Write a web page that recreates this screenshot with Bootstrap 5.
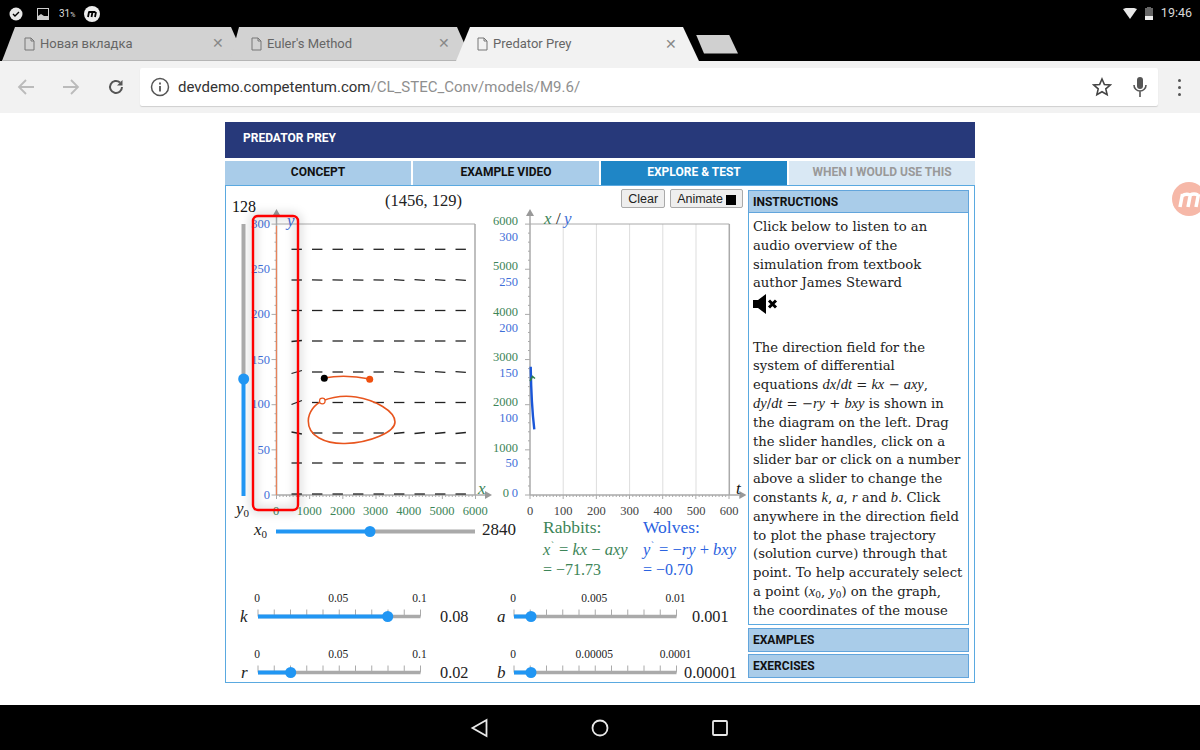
<!DOCTYPE html>
<html lang="en">
<head>
  <meta charset="UTF-8" />
  <meta name="viewport" content="width=device-width, initial-scale=1" />
  <title>Predator Prey</title>
  <link href="https://cdn.jsdelivr.net/npm/bootstrap@5.3.3/dist/css/bootstrap.min.css" rel="stylesheet" />
  <style>
    html, body { height: 750px; overflow: hidden; }
    body { background: #fff; font-family: Roboto, "Liberation Sans", sans-serif; }
    .status-strip { height: 27px; background: #000; color: #ddd; font-size: 10px; padding: 0 8px; }
    .st-img { margin-left: 13px; }
    .st-pct { margin-left: 10px; }
    .status-time { font-size: 12.5px; color: #d8d8d8; }
    .tab-strip { height: 34px; background: #000; padding-left: 2px; }
    .chrome-tab { height: 34px; background: #d2d2d2; color: #666; font-size: 13px; margin-right: -16px; border-bottom: 1px solid #b5b5b5; }
    .tab-a { width: 244px; padding: 0 22px; clip-path: polygon(0 100%, 13px 0, 229px 0, 244px 100%); }
    .tab-b { width: 242px; padding: 0 22px 0 21px; clip-path: polygon(0 100%, 9px 0, 227px 0, 242px 100%); }
    .tab-c { width: 243px; padding: 0 22px 0 21px; background: #f2f2f2; border-bottom: 0; clip-path: polygon(0 100%, 14px 0, 227px 0, 243px 100%); }
    .new-tab { width: 42px; height: 19px; margin-left: 13px; background: #d0d0d0; clip-path: polygon(0 0, 33px 0, 42px 100%, 8px 100%); }
    .tab-label { padding-left: 5px; }
    .tab-x { font-size: 14px; color: #888; }
    .tool-strip { height: 52px; background: #f2f2f2; padding: 7px 0; }
    .url-box { width: 1018px; height: 38px; background: #fff; box-shadow: 0 1px 1px #cfcfcf; font-size: 15px; color: #333; padding: 0 10px; border-radius: 2px; }
    .url-path { color: #8f8f8f; }
    .mic-gap { margin-left: 20px; }
    .nav-icons { width: 140px; padding-left: 17px; gap: 27px; }
    .page-area { height: 592px; padding-top: 9px; }
    .sim-wrap { width: 750px; margin: 0 auto; }
    .sim-title { height: 36px; background: #27397a; color: #fff; font-size: 12px; font-weight: 700; padding: 0 0 4px 18px; }
    .sim-tabs { margin-top: 3px; height: 24px; gap: 2px; }
    .sim-tab { flex: 1 1 0; background: #a9cce9; color: #111; font-size: 12px; font-weight: 700; padding-bottom: 2px; }
    .sim-tab.on { background: #1f86c6; color: #fff; }
    .sim-tab.off { background: #d9e8f4; color: #999; }
    .sim-box { height: 498px; border: 1px solid #5aa9e0; }
    .canvas-side { width: 520px; height: 496px; }
    .canvas-side svg { display: block; }
    .canvas-side text { font-family: "Liberation Serif", serif; }
    .sim-btns { top: 3px; right: 3px; gap: 5px; }
    .sim-btn { font-family: "Liberation Sans", sans-serif; font-size: 12.5px; line-height: 1; padding: 3px 6px 1px; height: 19px; background: #eee; border: 1px solid #aaa; border-radius: 2px; color: #222; }
    .stop-sq { width: 10px; height: 10px; background: #000; margin-left: 3px; }
    .side-panel { width: 223px; padding: 4px 0 0 2px; }
    .side-head { background: #a9cce9; border: 1px solid #62a5dc; color: #111; font-size: 12px; font-weight: 700; padding: 0 4px; }
    .head-a { height: 23px; }
    .head-b { height: 24px; margin-top: 3px; }
    .head-c { height: 24px; margin-top: 2px; }
    .side-body { height: 412px; overflow: hidden; border: 1px solid #5aa9e0; border-top: 0; padding: 5px 4px 0 4px; font-family: "DejaVu Serif", serif; font-size: 13.2px; line-height: 18.8px; color: #222; white-space: nowrap; }
    .side-body i { font-family: "Liberation Serif", serif; font-size: 14.5px; line-height: 1; }
    .side-body sub { font-size: 9px; line-height: 0; }
    .sound-row { height: 45.4px; padding-top: 1px; }
    .promo-dot { left: 1172px; top: 182px; width: 28px; height: 34px; overflow: hidden; }
    .bottom-strip { height: 45px; background: #000; }
  </style>
</head>
<body class="position-relative">

  <!-- android status bar -->
  <div class="status-strip d-flex align-items-center">
    <svg width="16" height="16" viewBox="0 0 16 16"><circle cx="8" cy="8" r="6.5" fill="#e8e8e8"/><path d="M5 8l2 2 4-4" fill="none" stroke="#000" stroke-width="1.4"/></svg>
    <svg class="st-img" width="12" height="12" viewBox="0 0 12 12"><rect x=".5" y=".5" width="11" height="11" fill="none" stroke="#ccc"/><path d="M1 11V8l3-2 3 2 4 0v3z" fill="#ccc"/></svg>
    <span class="st-pct">31<small style="font-size:7px">%</small></span>
    <svg class="ms-2" width="18" height="18" viewBox="0 0 18 18"><circle cx="9" cy="9" r="8" fill="#eee"/><path d="M5 12l1-5M8.500 12l1-5M12 12l1-5M5.500 7h7" fill="none" stroke="#000" stroke-width="1.800"/></svg>
    <div class="ms-auto d-flex align-items-center gap-2">
      <svg width="14" height="11" viewBox="0 0 14 11"><path d="M0 1Q7-2 14 1L7 11z" fill="#e8e8e8"/></svg>
      <svg width="8" height="13" viewBox="0 0 8 13"><rect y="1" width="8" height="12" fill="#666"/><rect y="9" width="8" height="4" fill="#eee"/><rect x="2" width="4" height="1" fill="#666"/></svg>
      <span class="status-time">19:46</span>
    </div>
  </div>

  <!-- chrome tabs -->
  <div class="tab-strip d-flex align-items-center">
    <div class="chrome-tab tab-a d-flex align-items-center">
      <svg width="11" height="14" viewBox="0 0 11 14"><path d="M1 1h6l3 3v9H1zM7 1v3h3" fill="none" stroke="#777"/></svg>
      <span class="tab-label">Новая вкладка</span>
      <span class="tab-x ms-auto">✕</span>
    </div>
    <div class="chrome-tab tab-b d-flex align-items-center">
      <svg width="11" height="14" viewBox="0 0 11 14"><path d="M1 1h6l3 3v9H1zM7 1v3h3" fill="none" stroke="#777"/></svg>
      <span class="tab-label">Euler's Method</span>
      <span class="tab-x ms-auto">✕</span>
    </div>
    <div class="chrome-tab tab-c d-flex align-items-center">
      <svg width="11" height="14" viewBox="0 0 11 14"><path d="M1 1h6l3 3v9H1zM7 1v3h3" fill="none" stroke="#777"/></svg>
      <span class="tab-label">Predator Prey</span>
      <span class="tab-x ms-auto">✕</span>
    </div>
    <div class="new-tab"></div>
  </div>

  <!-- chrome toolbar -->
  <div class="tool-strip d-flex">
    <div class="nav-icons d-flex align-items-center">
      <svg width="18" height="18" viewBox="0 0 18 18"><path d="M17 9H2M9 2L2 9l7 7" fill="none" stroke="#bbb" stroke-width="1.800"/></svg>
      <svg width="18" height="18" viewBox="0 0 18 18"><path d="M1 9h15M9 2l7 7-7 7" fill="none" stroke="#bbb" stroke-width="1.800"/></svg>
      <svg width="18" height="18" viewBox="0 0 18 18"><path d="M15 9a6 6 0 1 1-2-4.500" fill="none" stroke="#555" stroke-width="2"/><path d="M15.500 2v5.500H10z" fill="#555"/></svg>
    </div>
    <div class="url-box d-flex align-items-center">
      <svg class="me-2" width="20" height="20" viewBox="0 0 20 20"><circle cx="10" cy="10" r="8.500" fill="none" stroke="#555" stroke-width="1.500"/><path d="M10 9v5.500M10 5.500v2" stroke="#555" stroke-width="1.800"/></svg>
      <span>devdemo.competentum.com<span class="url-path">/CL_STEC_Conv/models/M9.6/</span></span>
      <svg class="ms-auto" width="20" height="20" viewBox="0 0 20 20"><path d="M10 2l2.400 5.500 5.800.5-4.400 3.900 1.300 5.800L10 14.700l-5.100 3 1.300-5.800L1.800 8l5.800-.5z" fill="none" stroke="#444" stroke-width="1.600"/></svg>
      <svg class="mic-gap" width="16" height="22" viewBox="0 0 16 22"><rect x="5" y="1" width="6" height="12" rx="3" fill="#555"/><path d="M2 9a6 6 0 0 0 12 0M8 15v6" fill="none" stroke="#555" stroke-width="1.600"/></svg>
    </div>
    <div class="flex-grow-1 d-flex flex-column align-items-center justify-content-center gap-1">
      <span class="rounded-circle" style="width:3px;height:3px;background:#555"></span>
      <span class="rounded-circle" style="width:3px;height:3px;background:#555"></span>
      <span class="rounded-circle" style="width:3px;height:3px;background:#555"></span>
    </div>
  </div>

  <!-- web page -->
  <div class="page-area">
    <div class="sim-wrap">
      <div class="sim-title d-flex align-items-center">PREDATOR PREY</div>
      <div class="sim-tabs d-flex">
        <div class="sim-tab d-flex align-items-center justify-content-center">CONCEPT</div>
        <div class="sim-tab d-flex align-items-center justify-content-center">EXAMPLE VIDEO</div>
        <div class="sim-tab on d-flex align-items-center justify-content-center">EXPLORE &amp; TEST</div>
        <div class="sim-tab off d-flex align-items-center justify-content-center">WHEN I WOULD USE THIS</div>
      </div>
      <div class="sim-box d-flex">
        <div class="canvas-side position-relative">
          <svg id="plots" width="520" height="496" viewBox="226 186 520 496"></svg>
          <div class="sim-btns position-absolute d-flex">
            <button class="sim-btn">Clear</button>
            <button class="sim-btn d-flex align-items-center">Animate<span class="stop-sq"></span></button>
          </div>
        </div>
        <div class="side-panel">
          <div class="side-head head-a d-flex align-items-center">INSTRUCTIONS</div>
          <div class="side-body">
            Click below to listen to an<br>audio overview of the<br>simulation from textbook<br>author James Steward
            <div class="sound-row">
              <svg width="28" height="20" viewBox="0 0 28 20"><path d="M0 6h5l8-6v20l-8-6H0z" fill="#000"/><path d="M16 6.500l7 7M23 6.500l-7 7" stroke="#000" stroke-width="3"/></svg>
            </div>
            The direction field for the<br>system of differential<br>equations <i>dx</i>/<i>dt</i> = <i>kx</i> − <i>axy</i>,<br><i>dy</i>/<i>dt</i> = −<i>ry</i> + <i>bxy</i> is shown in<br>the diagram on the left. Drag<br>the slider handles, click on a<br>slider bar or click on a number<br>above a slider to change the<br>constants <i>k</i>, <i>a</i>, <i>r</i> and <i>b</i>. Click<br>anywhere in the direction field<br>to plot the phase trajectory<br>(solution curve) through that<br>point. To help accurately select<br>a point (<i>x</i><sub>0</sub>, <i>y</i><sub>0</sub>) on the graph,<br>the coordinates of the mouse<br>position are displayed in the
          </div>
          <div class="side-head head-b d-flex align-items-center">EXAMPLES</div>
          <div class="side-head head-c d-flex align-items-center">EXERCISES</div>
        </div>
      </div>
    </div>
  </div>

  <div class="bottom-strip d-flex align-items-center justify-content-center">
    <svg width="270" height="24" viewBox="465 715 270 24" fill="none" stroke="#e8e8e8" stroke-width="1.800">
      <path d="M486.500 719v16l-14-8z"/><circle cx="600" cy="727" r="7.500"/><rect x="713" y="720" width="14" height="14" rx="1"/>
    </svg>
  </div>

  <!-- floating promo button of the extension -->
  <div class="promo-dot position-absolute">
    <svg width="28" height="34" viewBox="1172 182 28 34"><circle cx="1189" cy="199" r="17" fill="#f6b8a8"/><path d="M1180 207l2.500-13M1188 207l2.500-13M1196 207l2.500-13M1182 196q4-3 8-1q4-2 8 0" fill="none" stroke="#fff" stroke-width="3.500"/></svg>
  </div>

  <script>
    // plots are drawn in page coordinates, the viewBox takes care of the offset
    const BLUE = "#2196f3", GREY = "#aaa", GREEN = "#3d8558", YBLUE = "#3f6fd8", WBLUE = "#2a62e0";
    let out = "";
    const line = (x1, y1, x2, y2, c, w) => { out += `<line x1="${x1}" y1="${y1}" x2="${x2}" y2="${y2}" stroke="${c}" stroke-width="${w}"/>`; };
    const text = (x, y, s, c, size, anchor, extra) => { out += `<text x="${x}" y="${y}" fill="${c}" font-size="${size}" text-anchor="${anchor || "start"}" ${extra || ""}>${s}</text>`; };
    const it = 'font-style="italic"';
    const em = s => `<tspan font-style="italic">${s}</tspan>`;

    function axes(x0, x1) {
      line(x0, 224, x1, 224, GREY, 1);
      line(x1, 224, x1, 495, GREY, 1.5);
      line(x0, 495, x1 + 10, 495, GREY, 1.5);
      line(x0, 495, x0, 214, GREY, 1.5);
      out += `<path d="M${x0 - 4} 216L${x0} 209L${x0 + 4} 216z" fill="#999"/>`;
      out += `<path d="M${x1 + 10} 491L${x1 + 17} 495L${x1 + 10} 499z" fill="#999"/>`;
      for (let i = 0; i <= 30; i++) {
        const y = 495 - i * 9.03;
        line(x0 - (i % 5 ? 2 : 5), y, x0, y, GREY, 1);
      }
      for (let i = 0; i <= 60; i++) {
        const x = x0 + i * 3.317;
        line(x, 495, x, 495 + (i % 10 ? 2 : 4), GREY, 1);
      }
    }

    // left plot: direction field, each row is y and the tilt of its left, middle and right dashes
    axes(276.5, 475);
    const rows = [[249.3, 0, 0, 0], [280, 0, .2, .3], [310.5, 0, 0, 0], [341, -.5, 0, 0], [372, -1.5, 0, .4], [402.5, -2, 0, 0], [433, 1, 0, -.5], [463, 0, 0, 0], [494, 0, 0, 0]];
    rows.forEach(([y, l, m, r]) => {
      for (let i = 0; i < 9; i++) {
        const x = 296.7 + i * 20.5;
        const t = i < 1 ? l : i < 5 ? m : r;
        line(x - 5.2, y - t, x + 5.2, y + t, "#222", 1.3);
      }
    });
    [[300, 228], [250, 273], [200, 318], [150, 364], [100, 408], [50, 454], [0, 499]].forEach(([v, y]) => text(270, y, v, YBLUE, 12.5, "end"));
    for (let i = 0; i <= 6; i++) text(276 + i * 33.2, 515, i * 1000, GREEN, 12.5, "middle");
    text(287, 226, "y", YBLUE, 17, "start", it);
    text(478, 494, "x", GREEN, 17, "start", it);

    // trajectories
    out += `<path d="M322.300 401C332 397 345 395.500 356 397C375 400 395 411 395 422C395 432 370 443 345 443.500C325 444 308 436 308.300 421C308.300 412 315 404 322.300 401" fill="none" stroke="#e8551e" stroke-width="1.600"/>`;
    out += `<circle cx="322.300" cy="401" r="2.800" fill="#fff" stroke="#e8551e" stroke-width="1.200"/>`;
    out += `<path d="M324 378C340 375 355 376 370 379" fill="none" stroke="#e8551e" stroke-width="1.600"/>`;
    out += `<circle cx="324.300" cy="378.300" r="3.500" fill="#000"/><circle cx="369.700" cy="379.300" r="3.500" fill="#f0500f"/>`;

    // red marker with its soft shadow
    out += `<defs><filter id="soft" x="-60%" y="-20%" width="220%" height="140%"><feGaussianBlur stdDeviation="5"/></filter></defs>`;
    out += `<rect x="253" y="216" width="45" height="294" rx="5" fill="none" stroke="#000" stroke-opacity=".17" stroke-width="6" filter="url(#soft)"/>`;
    line(276.5, 226, 276.5, 495, "#e8835a", 1.2);
    out += `<rect x="253" y="216" width="45" height="294" rx="5" fill="none" stroke="#f00" stroke-width="2.400"/>`;

    // y0 and x0 sliders
    line(243.5, 224, 243.5, 379, GREY, 4);
    line(243.5, 379, 243.5, 496, BLUE, 4);
    out += `<circle cx="243.700" cy="379" r="5.500" fill="${BLUE}"/>`;
    line(276, 531.5, 370, 531.5, BLUE, 4);
    line(370, 531.5, 475, 531.5, GREY, 4);
    out += `<circle cx="370" cy="531.500" r="5.500" fill="${BLUE}"/>`;
    text(232, 212, "128", "#111", 16);
    text(385, 206, "(1456, 129)", "#222", 16.5);
    text(236, 514, 'y<tspan dy="3" font-size="11" font-style="normal">0</tspan>', "#222", 17, "start", it);
    text(254, 535, 'x<tspan dy="3" font-size="11" font-style="normal">0</tspan>', "#222", 17, "start", it);
    text(482, 535, "2840", "#222", 17);

    // right plot: x and y against t
    for (let i = 1; i < 6; i++) line(530 + i * 33.2, 224, 530 + i * 33.2, 495, "#ddd", 1);
    axes(530, 729.3);
    [[6000, 225], [5000, 270], [4000, 316], [3000, 361], [2000, 406], [1000, 452]].forEach(([v, y]) => text(518, y, v, GREEN, 12.5, "end"));
    [[300, 241], [250, 286], [200, 332], [150, 377], [100, 422], [50, 467]].forEach(([v, y]) => text(518, y, v, YBLUE, 12.5, "end"));
    text(509, 497, "0", GREEN, 12.5, "end");
    text(518, 497, "0", YBLUE, 12.5, "end");
    for (let i = 0; i <= 6; i++) text(530 + i * 33.2, 515, i * 100, "#444", 12.5, "middle");
    text(544, 224, "x", GREEN, 17, "start", it);
    text(556, 224, "/", "#222", 17);
    text(564, 224, "y", YBLUE, 17, "start", it);
    text(736, 494, "t", "#111", 17, "start", it);
    out += `<path d="M530.700 366.700C531 385 532 410 534.300 429.300" fill="none" stroke="#1a56d8" stroke-width="2.400"/>`;
    out += `<path d="M530 381L532.500 376.500L535 378.500" fill="none" stroke="#2e7d4a" stroke-width="1.600"/>`;

    // rates
    text(543, 533, "Rabbits:", GREEN, 17.5);
    text(543, 555, "x", GREEN, 16.5, "start", it);
    text(551, 548, "`", GREEN, 9);
    text(559, 555, `= ${em("kx")} − ${em("axy")}`, GREEN, 16.5);
    text(543, 575, "= −71.73", GREEN, 16);
    text(643, 533, "Wolves:", WBLUE, 17.5);
    text(643, 555, "y", WBLUE, 16.5, "start", it);
    text(651, 548, "`", WBLUE, 9);
    text(659, 555, `= −${em("ry")} + ${em("bxy")}`, WBLUE, 16.5);
    text(643, 575, "= −0.70", WBLUE, 16);

    // constant sliders
    function slider(x0, y, name, nameX, pos, mid, max, val, valX) {
      const w = 162.5;
      line(x0, y, x0 + w, y, GREY, 3.5);
      for (let i = 0; i <= 10; i++) line(x0 + i * w / 10, y - 7, x0 + i * w / 10, y, GREY, 1);
      line(x0, y, pos, y, BLUE, 4);
      out += `<circle cx="${pos}" cy="${y}" r="5.500" fill="${BLUE}"/>`;
      text(x0 - 1, y - 14.5, "0", "#222", 11.5, "middle");
      text(x0 + w / 2 - 1, y - 14.5, mid, "#222", 11.5, "middle");
      text(x0 + w - 1, y - 14.5, max, "#222", 11.5, "middle");
      text(nameX, y + 5, name, "#222", 17, "start", it);
      text(valX, y + 5, val, "#222", 16.3);
    }
    slider(258, 616.5, "k", 240, 387.7, "0.05", "0.1", "0.08", 440);
    slider(258, 672.5, "r", 241, 290.7, "0.05", "0.1", "0.02", 440);
    slider(514, 616.5, "a", 497, 531, "0.005", "0.01", "0.001", 692);
    slider(514, 672.5, "b", 497, 531, "0.00005", "0.0001", "0.00001", 684);

    document.getElementById("plots").innerHTML = out;
  </script>
  <script src="https://cdn.jsdelivr.net/npm/bootstrap@5.3.3/dist/js/bootstrap.bundle.min.js"></script>
</body>
</html>
